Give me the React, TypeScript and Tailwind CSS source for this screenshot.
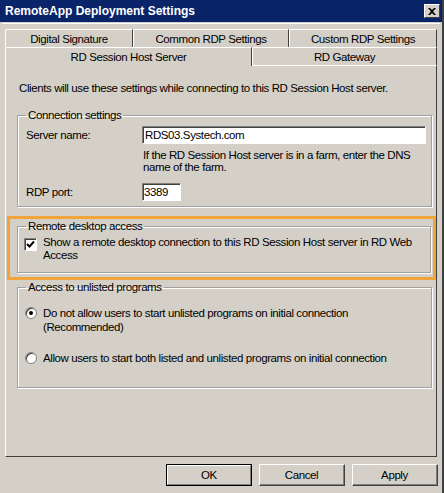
import React from "react";

function Tab({ label, w, selected }: { label: string; w: string; selected?: boolean }) {
  return (
    <div
      className={`${w} h-[18px] flex items-center justify-center border-l border-t border-r border-l-white border-t-white border-r-[#404040] rounded-tl-[2px] ${
        selected ? "relative z-10 h-[19px] -mb-px bg-[#d4d0c8]" : ""
      }`}
    >
      {label}
    </div>
  );
}

function GroupBox({ title, className, children }: { title: string; className: string; children: React.ReactNode }) {
  return (
    <fieldset className={`border border-[#a0a0a0] shadow-[inset_1px_1px_0_#fff,1px_1px_0_#fff] ${className}`}>
      <legend className="ml-[8px] px-[2px] leading-[14px]">{title}</legend>
      {children}
    </fieldset>
  );
}

function Sunken({ className, children }: { className: string; children?: React.ReactNode }) {
  return (
    <div className={`bg-white border border-t-[#808080] border-l-[#808080] border-b-white border-r-white shadow-[inset_1px_1px_0_#404040] ${className}`}>
      {children}
    </div>
  );
}

function Radio({ checked }: { checked?: boolean }) {
  return (
    <div className="w-[12px] h-[12px] rounded-full bg-white border border-[#808080] shadow-[inset_1px_1px_0_#404040] flex items-center justify-center shrink-0">
      {checked && <div className="w-[4px] h-[4px] rounded-full bg-black" />}
    </div>
  );
}

function Button({ label, def }: { label: string; def?: boolean }) {
  return (
    <div
      className={`w-[86px] h-[22px] flex items-center justify-center border ${
        def ? "border-black" : "border-t-white border-l-white border-b-[#404040] border-r-[#404040]"
      }`}
    >
      <div
        className={`w-full h-full flex items-center justify-center ${
          def ? "border border-t-white border-l-white border-b-[#808080] border-r-[#808080]" : "border-b border-r border-[#808080]"
        }`}
      >
        {label}
      </div>
    </div>
  );
}

export default function App() {
  return (
    <div
      className="w-[444px] h-[493px] bg-[#d4d0c8] text-black text-[11.5px] tracking-[-0.4px] leading-[14px] overflow-hidden border-r-2 border-r-[#404040] flex flex-col"
      style={{ fontFamily: '"Liberation Sans", Arial, sans-serif' }}
    >
      {/* Title bar */}
      <div className="h-[22px] bg-[#0a246a] flex items-center justify-between pl-[5px] pr-[2px] shrink-0">
        <span className="text-white font-bold text-[12px] tracking-normal">RemoteApp Deployment Settings</span>
        <div className="w-[16px] h-[14px] bg-[#d4d0c8] border border-t-white border-l-white border-b-[#404040] border-r-[#404040] flex items-center justify-center">
          <svg width="8" height="7" viewBox="0 0 8 7">
            <path d="M0 0 L2 0 L4 2 L6 0 L8 0 L5 3.5 L8 7 L6 7 L4 5 L2 7 L0 7 L3 3.5 Z" fill="black" />
          </svg>
        </div>
      </div>
      <div className="h-px bg-white mt-[1px] mx-[2px]" />

      {/* Tabs */}
      <div className="pl-[5px] pt-[5px] w-[437px]">
        <div className="flex">
          <Tab label="Digital Signature" w="w-[128px]" />
          <Tab label="Common RDP Settings" w="w-[156px]" />
          <Tab label="Custom RDP Settings" w="w-[148px]" />
        </div>
        <div className="flex items-end">
          <Tab label="RD Session Host Server" w="w-[247px]" selected />
          <Tab label="RD Gateway" w="w-[185px]" />
        </div>

        {/* Panel */}
        <div className="h-[392px] border border-t-white border-l-white border-b-[#404040] border-r-[#404040] flex flex-col">
          <p className="ml-[13px] mt-[15px]">Clients will use these settings while connecting to this RD Session Host server.</p>

          <GroupBox title="Connection settings" className="ml-[11px] mr-[4px] mt-[13px] h-[99px]">
            <div className="flex items-center mt-[4px]">
              <span className="ml-[8px] w-[116px]">Server name:</span>
              <Sunken className="w-[284px] h-[18px] flex items-center pl-[2px]">RDS03.Systech.com</Sunken>
            </div>
            <p className="ml-[125px] mt-[5px] w-[280px] leading-[12px]">If the RD Session Host server is in a farm, enter the DNS name of the farm.</p>
            <div className="flex items-center mt-[10px]">
              <span className="ml-[8px] w-[116px]">RDP port:</span>
              <Sunken className="w-[39px] h-[18px] flex items-center pl-[1px]">3389</Sunken>
            </div>
          </GroupBox>

          <div className="mt-[9px] ml-[1px] h-[64px] border-[3px] border-[#f0a43a] pl-[7px] pr-[2px]">
            <GroupBox title="Remote desktop access" className="mt-[0px] h-[54px]">
              <div className="flex items-start mt-[3px] pl-[6px]">
                <Sunken className="w-[13px] h-[13px] mt-[2px] shrink-0 flex items-center justify-center">
                  <svg width="9" height="9" viewBox="0 0 9 9">
                    <path d="M1 4 L3.5 6.5 L8 1.5" stroke="black" strokeWidth="2" fill="none" />
                  </svg>
                </Sunken>
                <p className="ml-[6px] w-[378px] leading-[13px]">Show a remote desktop connection to this RD Session Host server in RD Web Access</p>
              </div>
            </GroupBox>
          </div>

          <GroupBox title="Access to unlisted programs" className="ml-[11px] mr-[4px] mt-[0px] h-[108px]">
            <div className="flex items-start mt-[12px] pl-[7px]">
              <div className="mt-[1px]"><Radio checked /></div>
              <p className="ml-[6px] leading-[14px]">
                Do not allow users to start unlisted programs on initial connection
                <br />
                (Recommended)
              </p>
            </div>
            <div className="flex items-center mt-[17px] pl-[7px]">
              <Radio />
              <p className="ml-[6px]">Allow users to start both listed and unlisted programs on initial connection</p>
            </div>
          </GroupBox>
        </div>
      </div>

      {/* Buttons */}
      <div className="flex justify-end gap-[7px] pr-[4px] mt-[7px]">
        <Button label="OK" def />
        <Button label="Cancel" />
        <Button label="Apply" />
      </div>
    </div>
  );
}
